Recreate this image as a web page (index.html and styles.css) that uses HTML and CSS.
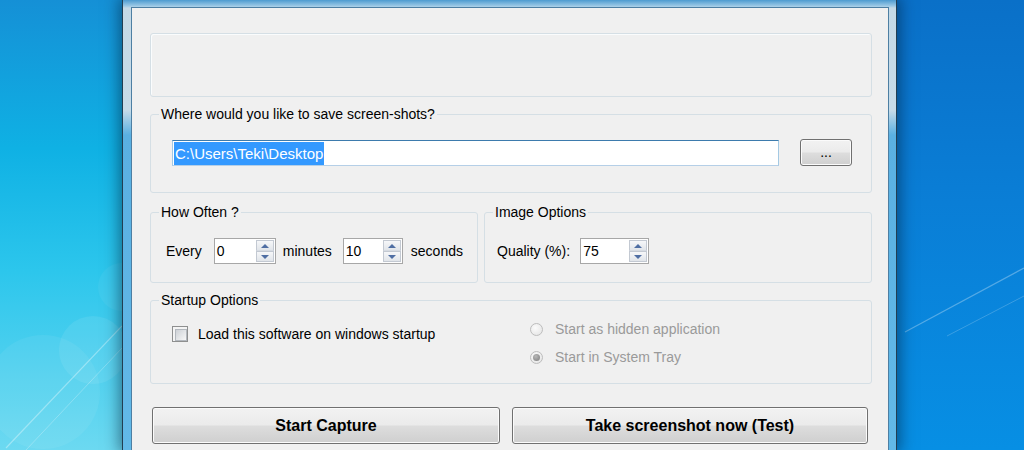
FILE: index.html
```html
<!DOCTYPE html>
<html lang="en">
<head>
  <meta charset="UTF-8">
  <title>Auto Screenshot Settings</title>
  <link rel="stylesheet" href="styles.css">
</head>
<body>
  <div class="desktop">
    <div class="wall wall-left">
      <svg width="122" height="450" viewBox="0 0 122 450">
        <circle cx="93" cy="350" r="34" fill="#fff" fill-opacity="0.08"/>
        <circle cx="43" cy="392" r="57" fill="#fff" fill-opacity="0.06"/>
        <circle cx="122" cy="287" r="24" fill="#fff" fill-opacity="0.05"/>
        <line x1="6" y1="448" x2="122" y2="326" stroke="#fff" stroke-opacity="0.35" stroke-width="1.2"/>
        <line x1="26" y1="450" x2="122" y2="348" stroke="#fff" stroke-opacity="0.25" stroke-width="1"/>
      </svg>
    </div>

    <div class="window">
      <div class="client">
        <div class="group group-blank"></div>

        <fieldset class="group save">
          <legend>Where would you like to save screen-shots?</legend>
          <div class="path-row">
            <div class="textbox"><span class="sel">C:\Users\Teki\Desktop</span></div>
            <button class="btn btn-browse">...</button>
          </div>
        </fieldset>

        <div class="options-row">
          <fieldset class="group often">
            <legend>How Often ?</legend>
            <div class="spin-row">
              <span class="lbl-every">Every</span>
              <div class="spin spin-min">
                <span class="spin-val">0</span>
                <div class="spin-btns"><span class="spin-up"></span><span class="spin-down"></span></div>
              </div>
              <span class="lbl-minutes">minutes</span>
              <div class="spin spin-sec">
                <span class="spin-val">10</span>
                <div class="spin-btns"><span class="spin-up"></span><span class="spin-down"></span></div>
              </div>
              <span class="lbl-seconds">seconds</span>
            </div>
          </fieldset>

          <fieldset class="group image">
            <legend>Image Options</legend>
            <div class="spin-row">
              <span class="lbl-quality">Quality (%):</span>
              <div class="spin spin-quality">
                <span class="spin-val">75</span>
                <div class="spin-btns"><span class="spin-up"></span><span class="spin-down"></span></div>
              </div>
            </div>
          </fieldset>
        </div>

        <fieldset class="group startup">
          <legend>Startup Options</legend>
          <div class="startup-body">
            <div class="startup-left">
              <div class="check-row">
                <span class="checkbox"></span>
                <span>Load this software on windows startup</span>
              </div>
            </div>
            <div class="startup-right">
              <div class="radio-row">
                <span class="radio"></span>
                <span>Start as hidden application</span>
              </div>
              <div class="radio-row">
                <span class="radio checked"></span>
                <span>Start in System Tray</span>
              </div>
            </div>
          </div>
        </fieldset>

        <div class="actions">
          <button class="btn btn-big btn-start">Start Capture</button>
          <button class="btn btn-big btn-test">Take screenshot now (Test)</button>
        </div>
      </div>
    </div>

    <div class="wall wall-right">
      <svg width="127" height="450" viewBox="0 0 127 450">
        <line x1="8" y1="332" x2="127" y2="268" stroke="#fff" stroke-opacity="0.3" stroke-width="1.2"/>
        <line x1="50" y1="336" x2="127" y2="296" stroke="#fff" stroke-opacity="0.2" stroke-width="1"/>
      </svg>
    </div>
  </div>
</body>
</html>
```

FILE: styles.css
```css
* {
  box-sizing: border-box;
}

body {
  margin: 0;
  width: 1024px;
  height: 450px;
  overflow: hidden;
  font-family: "Liberation Sans", Arial, sans-serif;
  font-size: 14px;
  color: #000;
}

.desktop {
  display: flex;
  height: 450px;
}

/* wallpaper either side of the window */
.wall {
  height: 450px;
}
.wall svg {
  display: block;
}
.wall-left {
  width: 122px;
  background: linear-gradient(to bottom, #1590d6 0%, #0fb1e4 33%, #2cc6ec 60%, #6cd9f1 100%);
}
.wall-right {
  flex: 1;
  background: linear-gradient(to bottom, #0a70c8 0%, #0a7ed6 45%, #078fe4 100%);
}

/* aero frame */
.window {
  position: relative;
  z-index: 1;
  width: 775px;
  padding: 7px 7px 0 8px;
  border-left: 1px solid #223e52;
  border-right: 1px solid #223e52;
  background: linear-gradient(to bottom, #4d9bd0 0, #9cc9e6 6px, #c4d9e6 8px, #c7dbe8 110px, #5ab0e2 135px, #62b9e8 100%);
  box-shadow: 0 0 14px 3px rgba(0, 25, 50, 0.5);
}

.client {
  height: 100%;
  display: flex;
  flex-direction: column;
  padding: 25px 16px 0 18px;
  background: #f0f0f0;
  border: 1px solid #4d7fa3;
  border-bottom: none;
}

/* group boxes */
.group {
  margin: 0;
  padding: 0 8px;
  border: 1px solid #d5dfe5;
  border-radius: 3px;
  min-width: 0;
}
.group legend {
  padding: 0 2px;
  line-height: 16px;
}
.group-blank {
  height: 64px;
  box-shadow: inset 1px 1px 0 #fafcfd;
}

.save {
  margin-top: 9px;
  padding-bottom: 26px;
}
.path-row {
  display: flex;
  align-items: flex-start;
  margin-top: 17px;
}
.textbox {
  margin: 1px 0 0 13px;
  width: 607px;
  height: 26px;
  padding: 1px 0 0 1px;
  background: #fff;
  border: 1px solid;
  border-color: #3d7bad #a4c9e3 #b5cfe7 #a4c9e3;
  font-size: 15px;
}
.sel {
  display: inline-block;
  padding: 0 1px;
  line-height: 23px;
  background: #3399ff;
  color: #fff;
}

.options-row {
  display: flex;
  gap: 6px;
  margin-top: 11px;
}
.often {
  width: 328px;
  padding-bottom: 18px;
}
.image {
  flex: 1;
  padding-bottom: 18px;
}
.spin-row {
  display: flex;
  align-items: center;
  height: 26px;
  margin-top: 18px;
}
.lbl-every { margin-left: 7px; }
.spin-min { margin-left: 12px; width: 62px; }
.lbl-minutes { margin-left: 7px; }
.spin-sec { margin-left: 11px; width: 60px; }
.lbl-seconds { margin-left: 8px; }
.lbl-quality { margin-left: 4px; }
.spin-quality { margin-left: 10px; width: 69px; }

/* numeric up/down */
.spin {
  display: flex;
  height: 26px;
  background: #fff;
  border: 1px solid #a7a7a7;
}
.spin-val {
  flex: 1;
  padding-left: 2px;
  line-height: 24px;
}
.spin-btns {
  display: flex;
  flex-direction: column;
  width: 18px;
  margin: 1px 1px 1px 0;
}
.spin-up,
.spin-down {
  flex: 1;
  display: flex;
  align-items: center;
  justify-content: center;
  border: 1px solid #c3c9d2;
  background: linear-gradient(to bottom, #f6f7f9, #e1e5ea);
}
.spin-up {
  border-bottom-color: #d6dbe2;
}
.spin-up::after {
  content: "";
  border-left: 4px solid transparent;
  border-right: 4px solid transparent;
  border-bottom: 4px solid #4f6ea3;
}
.spin-down::after {
  content: "";
  border-left: 4px solid transparent;
  border-right: 4px solid transparent;
  border-top: 4px solid #4f6ea3;
}

/* startup options */
.startup {
  margin-top: 9px;
}
.startup-body {
  display: flex;
  height: 75px;
}
.startup-left {
  width: 371px;
  padding: 17px 0 0 13px;
}
.check-row {
  display: flex;
  align-items: center;
  gap: 10px;
  height: 17px;
}
.checkbox {
  width: 16px;
  height: 16px;
  padding: 2px;
  border: 1px solid #8e8f8f;
  background: #f4f4f4;
}
.checkbox::after {
  content: "";
  display: block;
  width: 10px;
  height: 10px;
  border: 1px solid #b3b8be;
  background: linear-gradient(135deg, #cdd1d6, #f7f7f7);
}
.startup-right {
  display: flex;
  flex-direction: column;
  gap: 8px;
  padding-top: 11px;
  color: #9a9a9a;
}
.radio-row {
  display: flex;
  align-items: center;
  gap: 12px;
  height: 20px;
}
.radio {
  width: 13px;
  height: 13px;
  display: flex;
  align-items: center;
  justify-content: center;
  border: 1px solid #bdbdbd;
  border-radius: 50%;
  background: radial-gradient(circle at 40% 35%, #fbfbfb, #e2e2e2);
}
.radio.checked::after {
  content: "";
  width: 7px;
  height: 7px;
  border-radius: 50%;
  background: radial-gradient(circle at 40% 35%, #b8b8b8, #7c7c7c);
}

/* push buttons */
.btn {
  font-family: "Liberation Sans", Arial, sans-serif;
  font-size: 14px;
  color: #000;
  border: 1px solid #707070;
  border-radius: 3px;
  background: linear-gradient(to bottom, #f2f2f2 0%, #ebebeb 48%, #dddddd 52%, #cfcfcf 100%);
  box-shadow: inset 0 0 0 1px #fbfbfb;
  padding: 0;
}
.btn-browse {
  margin-left: 21px;
  width: 52px;
  height: 27px;
  line-height: 25px;
}
.actions {
  display: flex;
  gap: 12px;
  margin-top: 23px;
  padding-left: 2px;
}
.btn-big {
  height: 37px;
  font-size: 16px;
  font-weight: bold;
}
.btn-start {
  width: 348px;
}
.btn-test {
  width: 356px;
}
```
